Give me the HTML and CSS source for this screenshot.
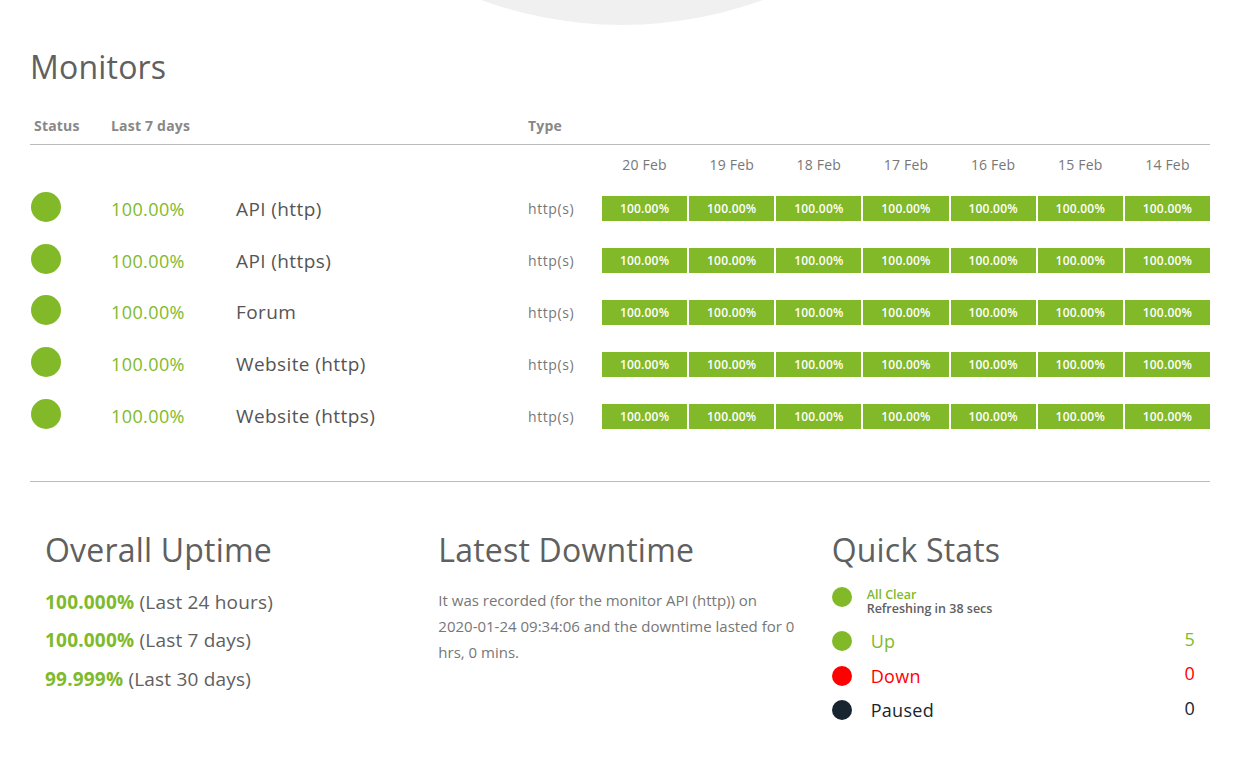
FILE: index.html
```html
<!DOCTYPE html>
<html lang="en">
<head>
<meta charset="utf-8">
<title>Status</title>
<link rel="stylesheet" href="styles.css">
</head>
<body>
<div class="hero"><div class="logo"></div></div>
<main class="container">
  <h2 class="title">Monitors</h2>
  <div class="table">
    <div class="row head">
      <div class="c1">Status</div>
      <div class="c2">Last 7 days</div>
      <div class="c3"></div>
      <div class="c4">Type</div>
      <div class="bars"></div>
    </div>
    <div class="row dates">
      <div></div><div></div><div></div><div></div>
      <div class="bars">
        <span>20 Feb</span><span>19 Feb</span><span>18 Feb</span><span>17 Feb</span><span>16 Feb</span><span>15 Feb</span><span>14 Feb</span>
      </div>
    </div>
    <div class="row mon">
      <div class="c1"><span class="dot"></span></div>
      <div class="c2 pct">100.00%</div>
      <div class="c3 name">API (http)</div>
      <div class="c4 type">http(s)</div>
      <div class="bars"><b>100.00%</b><b>100.00%</b><b>100.00%</b><b>100.00%</b><b>100.00%</b><b>100.00%</b><b>100.00%</b></div>
    </div>
    <div class="row mon">
      <div class="c1"><span class="dot"></span></div>
      <div class="c2 pct">100.00%</div>
      <div class="c3 name">API (https)</div>
      <div class="c4 type">http(s)</div>
      <div class="bars"><b>100.00%</b><b>100.00%</b><b>100.00%</b><b>100.00%</b><b>100.00%</b><b>100.00%</b><b>100.00%</b></div>
    </div>
    <div class="row mon">
      <div class="c1"><span class="dot"></span></div>
      <div class="c2 pct">100.00%</div>
      <div class="c3 name">Forum</div>
      <div class="c4 type">http(s)</div>
      <div class="bars"><b>100.00%</b><b>100.00%</b><b>100.00%</b><b>100.00%</b><b>100.00%</b><b>100.00%</b><b>100.00%</b></div>
    </div>
    <div class="row mon">
      <div class="c1"><span class="dot"></span></div>
      <div class="c2 pct">100.00%</div>
      <div class="c3 name">Website (http)</div>
      <div class="c4 type">http(s)</div>
      <div class="bars"><b>100.00%</b><b>100.00%</b><b>100.00%</b><b>100.00%</b><b>100.00%</b><b>100.00%</b><b>100.00%</b></div>
    </div>
    <div class="row mon">
      <div class="c1"><span class="dot"></span></div>
      <div class="c2 pct">100.00%</div>
      <div class="c3 name">Website (https)</div>
      <div class="c4 type">http(s)</div>
      <div class="bars"><b>100.00%</b><b>100.00%</b><b>100.00%</b><b>100.00%</b><b>100.00%</b><b>100.00%</b><b>100.00%</b></div>
    </div>
  </div>
  <div class="summary">
    <section class="col">
      <h3 class="title">Overall Uptime</h3>
      <p class="up-line"><strong>100.000%</strong> (Last 24 hours)</p>
      <p class="up-line"><strong>100.000%</strong> (Last 7 days)</p>
      <p class="up-line"><strong>99.999%</strong> (Last 30 days)</p>
    </section>
    <section class="col">
      <h3 class="title">Latest Downtime</h3>
      <p class="down-text">It was recorded (for the monitor API (http)) on <span class="nowrap">2020-01-24</span> 09:34:06 and the downtime lasted for 0 hrs, 0 mins.</p>
    </section>
    <section class="col">
      <h3 class="title">Quick Stats</h3>
      <div class="clear">
        <span class="sdot green"></span>
        <div class="clear-text">
          <div class="clear-title">All Clear</div>
          <div class="clear-sub">Refreshing in 38 secs</div>
        </div>
      </div>
      <div class="stat s-up"><span class="sdot green"></span><span class="label">Up</span><span class="num">5</span></div>
      <div class="stat s-down"><span class="sdot red"></span><span class="label">Down</span><span class="num">0</span></div>
      <div class="stat s-paused"><span class="sdot dark"></span><span class="label">Paused</span><span class="num">0</span></div>
    </section>
  </div>
</main>
</body>
</html>
```
FILE: styles.css
```css
* { box-sizing: border-box; }
body {
  margin: 0;
  background: #fff;
  font-family: "Open Sans", "DejaVu Sans", sans-serif;
  color: #555;
}
.hero {
  height: 25px;
  overflow: hidden;
  display: flex;
  justify-content: center;
}
.logo {
  flex: none;
  width: 820px;
  height: 820px;
  border-radius: 50%;
  background: #f0f0f0;
  margin-top: -795px;
  margin-left: 3px;
}
.container {
  padding: 0 30px;
}
.title {
  margin: 0;
  font-size: 32px;
  line-height: 40px;
  font-weight: 400;
  color: #606060;
  letter-spacing: 0.2px;
}
.container > .title {
  margin-top: 22px;
  margin-bottom: 19px;
}
.row {
  display: grid;
  grid-template-columns: 77px 125px 292px 76px 1fr;
  align-items: center;
}
.row > .c1 { padding-left: 4px; }
.row > .c2, .row > .c3, .row > .c4 { padding-left: 4px; }
.head {
  height: 39px;
  border-bottom: 1px solid #bbb;
  font-size: 14px;
  font-weight: 700;
  color: #888;
  letter-spacing: 0.2px;
}
.bars {
  display: grid;
  grid-template-columns: repeat(7, 1fr);
  gap: 2px;
  margin-left: 2px;
}
.dates {
  height: 38px;
}
.dates .bars span {
  text-align: center;
  font-size: 14px;
  color: #777;
  letter-spacing: 0.2px;
}
.mon {
  height: 51.8px;
}
.mon .c1 { padding-left: 1px; }
.dot {
  display: block;
  width: 30px;
  height: 30px;
  border-radius: 50%;
  background: #82b928;
  margin-top: -4px;
}
.pct {
  font-size: 18px;
  color: #7fba2c;
  letter-spacing: 0.4px;
}
.name {
  font-size: 19px;
  color: #555;
  letter-spacing: 0.4px;
}
.type {
  font-size: 14px;
  color: #777;
  letter-spacing: 0.6px;
}
.mon .bars b {
  display: block;
  height: 25px;
  line-height: 25px;
  background: #82b928;
  color: #fff;
  text-align: center;
  font-size: 12px;
  font-weight: 600;
  letter-spacing: 0.2px;
}
.summary {
  margin-top: 39px;
  border-top: 1px solid #bbb;
  padding-top: 48px;
  display: grid;
  grid-template-columns: repeat(3, 1fr);
}
.col {
  padding: 0 15px;
}
.up-line {
  margin: 0;
  font-size: 19px;
  line-height: 38.5px;
  color: #606060;
  letter-spacing: 0.2px;
}
.col .title + .up-line { margin-top: 13px; }
.up-line strong {
  color: #7fba2c;
  font-weight: 700;
}
.down-text {
  margin: 17px 0 0;
  font-size: 15px;
  line-height: 26px;
  color: #777;
}
.nowrap { white-space: nowrap; }
.clear {
  display: flex;
  align-items: flex-start;
  margin-top: 17px;
}
.sdot {
  flex: none;
  width: 20px;
  height: 20px;
  border-radius: 50%;
}
.green { background: #82b928; }
.red { background: #ff0000; }
.dark { background: #18242f; }
.clear-text {
  margin-left: 15px;
  font-size: 12.5px;
  line-height: 14px;
  font-weight: 600;
  padding-top: 1px;
}
.clear-title { color: #7fba2c; }
.clear-sub { color: #606060; }
.stat {
  display: flex;
  align-items: center;
  height: 34.5px;
  font-size: 18px;
  letter-spacing: 0.3px;
}
.clear + .stat { margin-top: 8px; }
.stat .label {
  margin-left: 19px;
  flex: 1;
}
.stat .num {
  margin-top: -5px;
}
.s-up { color: #7fba2c; }
.s-down { color: #ff0000; }
.s-paused { color: #18242f; }
```
